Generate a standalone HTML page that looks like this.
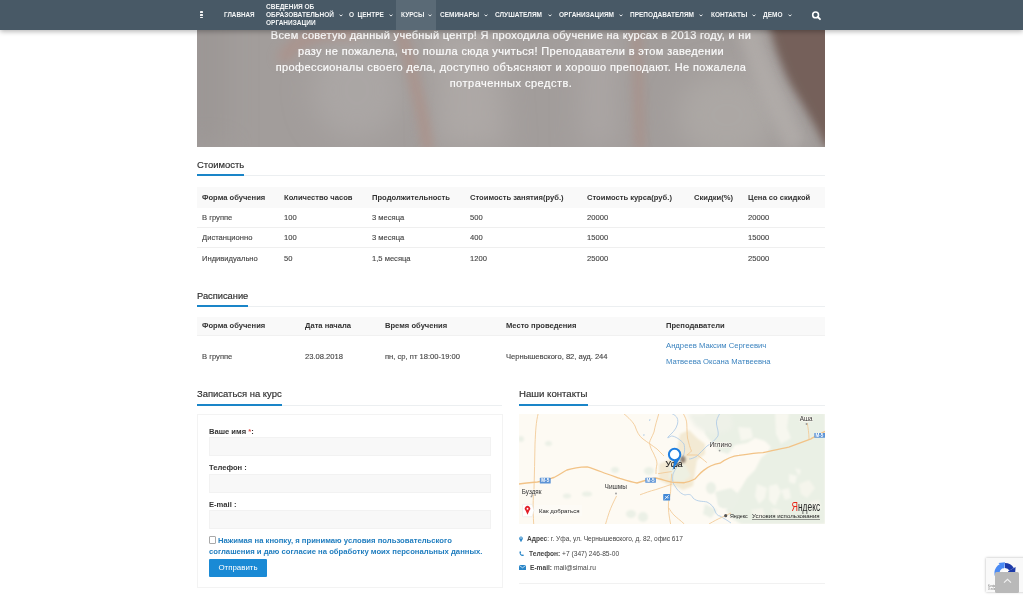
<!DOCTYPE html>
<html><head><meta charset="utf-8"><title>Курс</title>
<style>
html,body{margin:0;padding:0;background:#fff;}
body{width:1023px;height:597px;position:relative;overflow:hidden;font-family:"Liberation Sans",sans-serif;}
.t{position:absolute;white-space:nowrap;will-change:transform;}
.b{position:absolute;}
</style></head><body>
<div class="b" style="left:197px;top:0px;width:627.5px;height:147px;overflow:hidden;background:#a29d9b"><svg width="628" height="147" viewBox="0 0 628 147" style="position:absolute;left:0;top:0">
<defs>
<filter id="hb1" filterUnits="userSpaceOnUse" x="-100" y="-100" width="900" height="400"><feGaussianBlur stdDeviation="6"/></filter>
<filter id="hb2" filterUnits="userSpaceOnUse" x="-100" y="-100" width="900" height="400"><feGaussianBlur stdDeviation="14"/></filter>
<filter id="hb3" filterUnits="userSpaceOnUse" x="-100" y="-100" width="900" height="400"><feGaussianBlur stdDeviation="4.5"/></filter>
</defs>
<rect width="628" height="147" fill="#a29d9b"/>
<rect x="-20" y="0" width="50" height="147" fill="#9c9795" filter="url(#hb2)"/>
<!-- lighter zones -->
<ellipse cx="160" cy="90" rx="45" ry="50" fill="#aaa6a4" filter="url(#hb2)"/>
<path d="M236,30 L300,30 L310,147 L240,147 Z" fill="#ada8a6" filter="url(#hb2)"/>
<path d="M383,30 L418,30 L420,147 L385,147 Z" fill="#aba6a4" filter="url(#hb2)"/>
<ellipse cx="530" cy="115" rx="50" ry="45" fill="#aca7a4" filter="url(#hb2)"/>
<!-- reddish arc top-left -->
<path d="M85,62 C92,46 105,38 125,34 C140,32 150,32 160,34" fill="none" stroke="#b58b80" stroke-width="12" filter="url(#hb1)" opacity="0.55"/>
<!-- streak 1 -->
<path d="M202,26 C207,40 212,60 217,80 C222,100 228,125 231,150" fill="none" stroke="#b2887c" stroke-width="12" filter="url(#hb3)" opacity="0.42"/>
<!-- streak 2 -->
<path d="M440,26 C440,60 442,100 443,150" fill="none" stroke="#ae877c" stroke-width="12" filter="url(#hb3)" opacity="0.38"/>
<!-- highlight near brown -->
<path d="M548,20 C560,60 575,95 600,147" fill="none" stroke="#b2adaa" stroke-width="22" filter="url(#hb1)" opacity="0.8"/>
<!-- brown right -->
<path d="M566,0 L640,0 L640,147 L628,147 C620,128 606,105 594,85 C582,62 572,30 566,0 Z" fill="#75605a" filter="url(#hb3)"/>
</svg>
</div>
<div class="t" style="left:200.5px;width:620px;text-align:center;top:28.99px;font-size:11px;line-height:13.2px;color:#fbfbfb;font-weight:normal;letter-spacing:0.31px;-webkit-text-stroke:0.2px #fbfbfb;">Всем советую данный учебный центр! Я проходила обучение на курсах в 2013 году, и ни</div>
<div class="t" style="left:200.5px;width:620px;text-align:center;top:44.89px;font-size:11px;line-height:13.2px;color:#fbfbfb;font-weight:normal;letter-spacing:0.36px;-webkit-text-stroke:0.2px #fbfbfb;">разу не пожалела, что пошла сюда учиться! Преподаватели в этом заведении</div>
<div class="t" style="left:200.5px;width:620px;text-align:center;top:60.69px;font-size:11px;line-height:13.2px;color:#fbfbfb;font-weight:normal;letter-spacing:0.39px;-webkit-text-stroke:0.2px #fbfbfb;">профессионалы своего дела, доступно объясняют и хорошо преподают. Не пожалела</div>
<div class="t" style="left:200.5px;width:620px;text-align:center;top:76.89px;font-size:11px;line-height:13.2px;color:#fbfbfb;font-weight:normal;letter-spacing:0.5px;-webkit-text-stroke:0.2px #fbfbfb;">потраченных средств.</div>
<div class="b" style="left:0px;top:0px;width:1023px;height:30px;background:#485966;box-shadow:0 1.5px 5px rgba(0,0,0,0.3);"></div>
<div class="b" style="left:396px;top:0px;width:40px;height:30px;background:#5a6a76;"></div>
<div class="b" style="left:200.2px;top:10.8px;width:3px;height:1.8px;background:#f4f4f4;border-radius:0.6px;"></div>
<div class="b" style="left:200.2px;top:13.8px;width:3px;height:1.8px;background:#f4f4f4;border-radius:0.6px;"></div>
<div class="b" style="left:200.2px;top:16.6px;width:3px;height:1.8px;background:#f4f4f4;border-radius:0.6px;"></div>
<div class="t" style="left:223.6px;top:10.94px;font-size:6.3px;line-height:7.56px;color:#f3f5f6;font-weight:bold;letter-spacing:0px;">ГЛАВНАЯ</div>
<div class="t" style="left:266.2px;top:2.95px;font-size:6.5px;line-height:7.8px;color:#f3f5f6;font-weight:bold;letter-spacing:0px;">СВЕДЕНИЯ ОБ</div>
<div class="t" style="left:266.2px;top:10.75px;font-size:6.5px;line-height:7.8px;color:#f3f5f6;font-weight:bold;letter-spacing:0px;">ОБРАЗОВАТЕЛЬНОЙ</div>
<div class="t" style="left:266.2px;top:18.55px;font-size:6.5px;line-height:7.8px;color:#f3f5f6;font-weight:bold;letter-spacing:0px;">ОРГАНИЗАЦИИ</div>
<svg class="b" style="left:338.5px;top:13.8px" width="4" height="3" viewBox="0 0 4 3"><path d="M0.5 0.6 L2 2.1 L3.5 0.6" fill="none" stroke="#eef1f3" stroke-width="1"/></svg>
<div class="t" style="left:349.4px;top:10.85px;font-size:6.5px;line-height:7.8px;color:#f3f5f6;font-weight:bold;letter-spacing:0px;word-spacing:1.6px;">О ЦЕНТРЕ</div>
<svg class="b" style="left:388.8px;top:13.8px" width="4" height="3" viewBox="0 0 4 3"><path d="M0.5 0.6 L2 2.1 L3.5 0.6" fill="none" stroke="#eef1f3" stroke-width="1"/></svg>
<div class="t" style="left:400.7px;top:10.85px;font-size:6.5px;line-height:7.8px;color:#f3f5f6;font-weight:bold;letter-spacing:0px;">КУРСЫ</div>
<svg class="b" style="left:428.2px;top:13.8px" width="4" height="3" viewBox="0 0 4 3"><path d="M0.5 0.6 L2 2.1 L3.5 0.6" fill="none" stroke="#eef1f3" stroke-width="1"/></svg>
<div class="t" style="left:439.8px;top:10.85px;font-size:6.5px;line-height:7.8px;color:#f3f5f6;font-weight:bold;letter-spacing:0px;">СЕМИНАРЫ</div>
<svg class="b" style="left:483.5px;top:13.8px" width="4" height="3" viewBox="0 0 4 3"><path d="M0.5 0.6 L2 2.1 L3.5 0.6" fill="none" stroke="#eef1f3" stroke-width="1"/></svg>
<div class="t" style="left:495px;top:10.85px;font-size:6.5px;line-height:7.8px;color:#f3f5f6;font-weight:bold;letter-spacing:0px;">СЛУШАТЕЛЯМ</div>
<svg class="b" style="left:548px;top:13.8px" width="4" height="3" viewBox="0 0 4 3"><path d="M0.5 0.6 L2 2.1 L3.5 0.6" fill="none" stroke="#eef1f3" stroke-width="1"/></svg>
<div class="t" style="left:558.8px;top:10.85px;font-size:6.5px;line-height:7.8px;color:#f3f5f6;font-weight:bold;letter-spacing:0px;">ОРГАНИЗАЦИЯМ</div>
<svg class="b" style="left:618.8px;top:13.8px" width="4" height="3" viewBox="0 0 4 3"><path d="M0.5 0.6 L2 2.1 L3.5 0.6" fill="none" stroke="#eef1f3" stroke-width="1"/></svg>
<div class="t" style="left:630.2px;top:10.85px;font-size:6.5px;line-height:7.8px;color:#f3f5f6;font-weight:bold;letter-spacing:0px;">ПРЕПОДАВАТЕЛЯМ</div>
<svg class="b" style="left:699.2px;top:13.8px" width="4" height="3" viewBox="0 0 4 3"><path d="M0.5 0.6 L2 2.1 L3.5 0.6" fill="none" stroke="#eef1f3" stroke-width="1"/></svg>
<div class="t" style="left:711px;top:10.85px;font-size:6.5px;line-height:7.8px;color:#f3f5f6;font-weight:bold;letter-spacing:0px;">КОНТАКТЫ</div>
<svg class="b" style="left:751.9px;top:13.8px" width="4" height="3" viewBox="0 0 4 3"><path d="M0.5 0.6 L2 2.1 L3.5 0.6" fill="none" stroke="#eef1f3" stroke-width="1"/></svg>
<div class="t" style="left:763px;top:10.85px;font-size:6.5px;line-height:7.8px;color:#f3f5f6;font-weight:bold;letter-spacing:0px;">ДЕМО</div>
<svg class="b" style="left:787.5px;top:13.8px" width="4" height="3" viewBox="0 0 4 3"><path d="M0.5 0.6 L2 2.1 L3.5 0.6" fill="none" stroke="#eef1f3" stroke-width="1"/></svg>
<svg class="b" style="left:811px;top:11px" width="11" height="10" viewBox="0 0 11 10"><circle cx="4.6" cy="3.9" r="2.9" fill="none" stroke="#fff" stroke-width="1.6"/><path d="M6.8 6 L9 8.2" stroke="#fff" stroke-width="1.8" stroke-linecap="round"/></svg>
<div class="b" style="left:197px;top:175px;width:627.5px;height:1px;background:#eceff1;"></div>
<div class="b" style="left:197px;top:174px;width:47px;height:2px;background:#1a85c8;"></div>
<div class="t" style="left:197px;top:158.76px;font-size:9.45px;line-height:11.34px;color:#2b2b2b;font-weight:normal;letter-spacing:0px;-webkit-text-stroke:0.15px #2b2b2b;">Стоимость</div>
<div class="b" style="left:197px;top:306px;width:627.5px;height:1px;background:#eceff1;"></div>
<div class="b" style="left:197px;top:305px;width:51.30000000000001px;height:2px;background:#1a85c8;"></div>
<div class="t" style="left:197px;top:291.00px;font-size:9.3px;line-height:11.16px;color:#2b2b2b;font-weight:normal;letter-spacing:0px;-webkit-text-stroke:0.15px #2b2b2b;">Расписание</div>
<div class="b" style="left:197px;top:404.8px;width:305px;height:1px;background:#eceff1;"></div>
<div class="b" style="left:197px;top:403.8px;width:85.19999999999999px;height:2px;background:#1a85c8;"></div>
<div class="t" style="left:197px;top:388.46px;font-size:9.45px;line-height:11.34px;color:#2b2b2b;font-weight:normal;letter-spacing:0px;-webkit-text-stroke:0.15px #2b2b2b;">Записаться на курс</div>
<div class="b" style="left:519px;top:404.8px;width:305.5px;height:1px;background:#eceff1;"></div>
<div class="b" style="left:519px;top:403.8px;width:68.5px;height:2px;background:#1a85c8;"></div>
<div class="t" style="left:519px;top:388.37px;font-size:9.65px;line-height:11.58px;color:#2b2b2b;font-weight:normal;letter-spacing:0px;-webkit-text-stroke:0.15px #2b2b2b;">Наши контакты</div>
<div class="b" style="left:197px;top:187px;width:627.5px;height:21px;background:#f9f9f9;"></div>
<div class="t" style="left:201.8px;top:192.81px;font-size:7.6px;line-height:9.12px;color:#333;font-weight:bold;letter-spacing:0px;">Форма обучения</div>
<div class="t" style="left:283.5px;top:192.81px;font-size:7.6px;line-height:9.12px;color:#333;font-weight:bold;letter-spacing:0px;">Количество часов</div>
<div class="t" style="left:371.6px;top:192.81px;font-size:7.6px;line-height:9.12px;color:#333;font-weight:bold;letter-spacing:0px;">Продолжительность</div>
<div class="t" style="left:470px;top:192.81px;font-size:7.6px;line-height:9.12px;color:#333;font-weight:bold;letter-spacing:0px;">Стоимость занятия(руб.)</div>
<div class="t" style="left:587px;top:192.81px;font-size:7.6px;line-height:9.12px;color:#333;font-weight:bold;letter-spacing:0px;">Стоимость курса(руб.)</div>
<div class="t" style="left:693.7px;top:192.81px;font-size:7.6px;line-height:9.12px;color:#333;font-weight:bold;letter-spacing:0px;">Скидки(%)</div>
<div class="t" style="left:747.5px;top:192.81px;font-size:7.6px;line-height:9.12px;color:#333;font-weight:bold;letter-spacing:0px;">Цена со скидкой</div>
<div class="t" style="left:201.8px;top:213.11px;font-size:7.6px;line-height:9.12px;color:#444;font-weight:normal;letter-spacing:0px;-webkit-text-stroke:0.12px #444;">В группе</div>
<div class="t" style="left:283.5px;top:213.11px;font-size:7.6px;line-height:9.12px;color:#444;font-weight:normal;letter-spacing:0px;-webkit-text-stroke:0.12px #444;">100</div>
<div class="t" style="left:371.6px;top:213.11px;font-size:7.6px;line-height:9.12px;color:#444;font-weight:normal;letter-spacing:0px;-webkit-text-stroke:0.12px #444;">3 месяца</div>
<div class="t" style="left:470px;top:213.11px;font-size:7.6px;line-height:9.12px;color:#444;font-weight:normal;letter-spacing:0px;-webkit-text-stroke:0.12px #444;">500</div>
<div class="t" style="left:587px;top:213.11px;font-size:7.6px;line-height:9.12px;color:#444;font-weight:normal;letter-spacing:0px;-webkit-text-stroke:0.12px #444;">20000</div>
<div class="t" style="left:747.5px;top:213.11px;font-size:7.6px;line-height:9.12px;color:#444;font-weight:normal;letter-spacing:0px;-webkit-text-stroke:0.12px #444;">20000</div>
<div class="t" style="left:201.8px;top:233.41px;font-size:7.6px;line-height:9.12px;color:#444;font-weight:normal;letter-spacing:0px;-webkit-text-stroke:0.12px #444;">Дистанционно</div>
<div class="t" style="left:283.5px;top:233.41px;font-size:7.6px;line-height:9.12px;color:#444;font-weight:normal;letter-spacing:0px;-webkit-text-stroke:0.12px #444;">100</div>
<div class="t" style="left:371.6px;top:233.41px;font-size:7.6px;line-height:9.12px;color:#444;font-weight:normal;letter-spacing:0px;-webkit-text-stroke:0.12px #444;">3 месяца</div>
<div class="t" style="left:470px;top:233.41px;font-size:7.6px;line-height:9.12px;color:#444;font-weight:normal;letter-spacing:0px;-webkit-text-stroke:0.12px #444;">400</div>
<div class="t" style="left:587px;top:233.41px;font-size:7.6px;line-height:9.12px;color:#444;font-weight:normal;letter-spacing:0px;-webkit-text-stroke:0.12px #444;">15000</div>
<div class="t" style="left:747.5px;top:233.41px;font-size:7.6px;line-height:9.12px;color:#444;font-weight:normal;letter-spacing:0px;-webkit-text-stroke:0.12px #444;">15000</div>
<div class="t" style="left:201.8px;top:253.71px;font-size:7.6px;line-height:9.12px;color:#444;font-weight:normal;letter-spacing:0px;-webkit-text-stroke:0.12px #444;">Индивидуально</div>
<div class="t" style="left:283.5px;top:253.71px;font-size:7.6px;line-height:9.12px;color:#444;font-weight:normal;letter-spacing:0px;-webkit-text-stroke:0.12px #444;">50</div>
<div class="t" style="left:371.6px;top:253.71px;font-size:7.6px;line-height:9.12px;color:#444;font-weight:normal;letter-spacing:0px;-webkit-text-stroke:0.12px #444;">1,5 месяца</div>
<div class="t" style="left:470px;top:253.71px;font-size:7.6px;line-height:9.12px;color:#444;font-weight:normal;letter-spacing:0px;-webkit-text-stroke:0.12px #444;">1200</div>
<div class="t" style="left:587px;top:253.71px;font-size:7.6px;line-height:9.12px;color:#444;font-weight:normal;letter-spacing:0px;-webkit-text-stroke:0.12px #444;">25000</div>
<div class="t" style="left:747.5px;top:253.71px;font-size:7.6px;line-height:9.12px;color:#444;font-weight:normal;letter-spacing:0px;-webkit-text-stroke:0.12px #444;">25000</div>
<div class="b" style="left:197px;top:227px;width:627.5px;height:1px;background:#efefef;"></div>
<div class="b" style="left:197px;top:247.3px;width:627.5px;height:1px;background:#efefef;"></div>
<div class="b" style="left:197px;top:316.5px;width:627.5px;height:19.5px;background:#f9f9f9;border-bottom:1px solid #f1f1f1;box-sizing:border-box;"></div>
<div class="t" style="left:201.8px;top:321.41px;font-size:7.6px;line-height:9.12px;color:#333;font-weight:bold;letter-spacing:0px;">Форма обучения</div>
<div class="t" style="left:305px;top:321.41px;font-size:7.6px;line-height:9.12px;color:#333;font-weight:bold;letter-spacing:0px;">Дата начала</div>
<div class="t" style="left:384.5px;top:321.41px;font-size:7.6px;line-height:9.12px;color:#333;font-weight:bold;letter-spacing:0px;">Время обучения</div>
<div class="t" style="left:505.6px;top:321.41px;font-size:7.6px;line-height:9.12px;color:#333;font-weight:bold;letter-spacing:0px;">Место проведения</div>
<div class="t" style="left:666px;top:321.41px;font-size:7.6px;line-height:9.12px;color:#333;font-weight:bold;letter-spacing:0px;">Преподаватели</div>
<div class="t" style="left:201.8px;top:351.81px;font-size:7.6px;line-height:9.12px;color:#444;font-weight:normal;letter-spacing:0px;-webkit-text-stroke:0.12px #444;">В группе</div>
<div class="t" style="left:305px;top:351.81px;font-size:7.6px;line-height:9.12px;color:#444;font-weight:normal;letter-spacing:0px;-webkit-text-stroke:0.12px #444;">23.08.2018</div>
<div class="t" style="left:384.5px;top:351.81px;font-size:7.6px;line-height:9.12px;color:#444;font-weight:normal;letter-spacing:0px;-webkit-text-stroke:0.12px #444;">пн, ср, пт 18:00-19:00</div>
<div class="t" style="left:505.6px;top:351.81px;font-size:7.6px;line-height:9.12px;color:#444;font-weight:normal;letter-spacing:0px;-webkit-text-stroke:0.12px #444;">Чернышевского, 82, ауд. 244</div>
<div class="t" style="left:666px;top:341.31px;font-size:7.7px;line-height:9.24px;color:#3b83bf;font-weight:normal;letter-spacing:0px;">Андреев Максим Сергеевич</div>
<div class="t" style="left:666px;top:357.11px;font-size:7.7px;line-height:9.24px;color:#3b83bf;font-weight:normal;letter-spacing:0px;">Матвеева Оксана Матвеевна</div>
<div class="b" style="left:197px;top:413.5px;width:305.5px;height:174.5px;border:1px solid #f3f3f3;box-sizing:border-box;"></div>
<div class="t" style="left:208.8px;top:426.81px;font-size:7.6px;line-height:9.12px;color:#333;font-weight:bold;letter-spacing:0px;">Ваше имя <span style="color:#e0504a">*</span>:</div>
<div class="b" style="left:208.5px;top:436.5px;width:282.5px;height:19px;background:#f8f8f8;border:1px solid #f2f2f2;box-sizing:border-box;"></div>
<div class="t" style="left:208.8px;top:463.41px;font-size:7.6px;line-height:9.12px;color:#333;font-weight:bold;letter-spacing:0px;">Телефон :</div>
<div class="b" style="left:208.5px;top:473.6px;width:282.5px;height:19px;background:#f8f8f8;border:1px solid #f2f2f2;box-sizing:border-box;"></div>
<div class="t" style="left:208.8px;top:499.71px;font-size:7.6px;line-height:9.12px;color:#333;font-weight:bold;letter-spacing:0px;">E-mail :</div>
<div class="b" style="left:208.5px;top:510.4px;width:282.5px;height:19px;background:#f8f8f8;border:1px solid #f2f2f2;box-sizing:border-box;"></div>
<div class="b" style="left:208.6px;top:536.3px;width:7.4px;height:7.4px;border:1px solid #a9a9a9;border-radius:1px;box-sizing:border-box;background:#fff;"></div>
<div class="t" style="left:218px;top:535.72px;font-size:7.69px;line-height:9.23px;color:#1f7dbf;font-weight:bold;letter-spacing:0px;">Нажимая на кнопку, я принимаю условия пользовательского</div>
<div class="t" style="left:208.5px;top:547.22px;font-size:7.69px;line-height:9.23px;color:#1f7dbf;font-weight:bold;letter-spacing:0px;">соглашения и даю согласие на обработку моих персональных данных.</div>
<div class="b" style="left:209px;top:559px;width:57.5px;height:17.5px;background:#1a8ad5;border-radius:1px;"></div>
<div class="t" style="left:207.5px;width:60px;text-align:center;top:563.02px;font-size:7.9px;line-height:9.48px;color:#fff;font-weight:normal;letter-spacing:0px;">Отправить</div>
<div class="b" style="left:519px;top:413.8px;width:306px;height:110px;background:#fdfaf3;overflow:hidden;will-change:transform"><svg width="306" height="110" viewBox="0 0 306 110" style="position:absolute;left:0;top:0">
<defs>
<filter id="bl1" filterUnits="userSpaceOnUse" x="-50" y="-50" width="420" height="220"><feGaussianBlur stdDeviation="1"/></filter>
<filter id="bl2" filterUnits="userSpaceOnUse" x="-50" y="-50" width="420" height="220"><feGaussianBlur stdDeviation="2"/></filter>
</defs>
<rect width="306" height="110" fill="#fdfaf3"/>
<!-- forest green right -->
<path d="M186,-1 L306,-1 L306,110 L222,110 L212,104 L207,96 L214,86 L222,74 L228,64 L236,56 L242,44 L248,39 L252,33 L246,27 L236,24 L228,29 L216,31 L209,40 L200,37 L192,28 L186,20 Z" fill="#eaf0e5" filter="url(#bl1)"/>
<path d="M219,13 L232,14 L234,24 L222,27 Z M256,-1 L270,-1 L268,14 L272,24 L262,30 L257,20 Z M250,72 L258,70 L262,78 L256,92 L250,86 Z M262,76 L270,74 L272,84 L266,86 Z M270,60 L278,62 L276,70 L270,68 Z M238,70 L248,74 L246,84 L240,90 L236,82 Z M276,54 L282,56 L280,62 Z" fill="#f7f7ef" filter="url(#bl1)"/>
<path d="M280,70 L290,66 L296,74 L288,84 L282,80 Z M290,88 L300,86 L302,94 L294,96 Z M232,96 L244,94 L246,104 L236,106 Z M252,94 L262,96 L258,104 Z" fill="#f5f5ec" filter="url(#bl1)"/>
<path d="M168,-1 L212,-1 L214,14 L200,20 L186,18 L176,12 Z" fill="#eef1e8" filter="url(#bl2)"/>
<!-- scattered green blobs -->
<g fill="#ebf0e6" filter="url(#bl1)">
<ellipse cx="29.5" cy="29.4" rx="3.5" ry="2.5"/>
<ellipse cx="96" cy="56" rx="4" ry="3"/>
<ellipse cx="68" cy="80" rx="5" ry="2.5"/>
<ellipse cx="48" cy="82" rx="4" ry="2.5"/>
<ellipse cx="130" cy="57" rx="5" ry="4"/>
<ellipse cx="124" cy="103" rx="5" ry="5"/>
<ellipse cx="192" cy="74" rx="5" ry="6"/>
<ellipse cx="205" cy="88" rx="6" ry="6"/>
<ellipse cx="112" cy="100" rx="5" ry="4"/>
<ellipse cx="2" cy="25" rx="3" ry="3"/>
</g>
<!-- city area -->
<path d="M140,50 L150,46 L158,36 L161,20 L170,16 L178,24 L186,30 L186,40 L178,46 L176,58 L174,72 L164,76 L156,72 L148,70 L140,66 Z" fill="#f3ead4" filter="url(#bl1)"/>
<path d="M150,52 L166,50 L172,62 L160,70 L150,64 Z" fill="#eef0e2" filter="url(#bl1)"/>
<path d="M196,78 L212,74 L222,82 L214,96 L200,92 Z M186,90 L198,96 L192,104 L184,100 Z" fill="#ebf0e6" filter="url(#bl1)"/>
<!-- rivers -->
<g fill="none" stroke="#a9c8e6" stroke-width="0.8">
<path d="M151.5,-1 C156,1 160,3 158.5,10 C157,16 153,19 149,23 C148,25 150,23 152.5,22 C156,22 162,26 165,30 C166,34 166,40 163,44 C160,50 156,55 154,60 C153,66 154,70 156,72 C158,76 162,80 166,81 C170,80 172,80 174,84 C178,88 184,87 188,88 C192,90 195,93 196,97 C197,100 199,102 201,102 C204,104 208,106 212,109"/>
<path d="M201,-1 C199,3 197,6 197.5,10 C198,14 200,18 199,22 C196,26 192,30 188,32 C184,36 180,40 178,42 C175,44 172,45 170,45"/>
<path d="M131,5 L130.5,7 M125,20 L124.8,22"/>
</g>
<!-- roads -->
<g fill="none" stroke="#f2c994" stroke-width="0.85">
<path d="M19.3,-1 C17,8 16.6,17 16,30 C15.7,45 15.5,60 15,75 C14,85 13.8,95 14.7,110"/>
<path d="M104,-1 C110,4 114,8 116,12 C118,18 120,22 124,25 C128,28 134,32 138,35 C141,38 143,40 145,42"/>
<path d="M140,-1 C138,6 136,12 135,18 C133,23 131,26 130.5,28.6 C131,33 133,37 134.4,39 C136,43 138,46 138,50 C137,54 137,57 137,60"/>
<path d="M164,-1 C166,3 167.8,6 167.8,10 C168,15 168,20 168.5,24 C170,30 171,34 172.5,37 C171,39 169,40 167.8,41 C172,41 176,41 178.3,41 C182,44 185,46 187.8,48.6"/>
<path d="M97.6,81.9 C95,87 92,93 90.2,98.4 C89,102 88,105 86.6,110"/>
<path d="M121,80.8 C126,79 131,77 136.8,75.6 C142,74 147,72 152.7,70.3"/>
<path d="M152.7,59.7 C152,66 151.8,72 151.6,77.7 C151,82 150,85 149.5,88.2 C149,95 150,102 151.6,110"/>
<path d="M149.5,93.5 C151,96 153,99 154.8,100.9 C158,104 161,106 165.3,110"/>
<path d="M139,59.7 C144,59 148,58 152.7,57.6"/>
<path d="M288.3,9 C289,14 290,19 290,25"/>
<path d="M190,110 C200,104 206,102 212,99"/>

</g>
<path d="M0,70 C6,69 12,68.5 18.4,68 C24,67 30,65 35,63.5 C40,61 44,58 47.9,56 C54,54 62,53 68.1,52.8 C73,54 78,56 82.9,58 C88,60 94,62 100.9,64.4 C106,66 112,68 118,69 C124,67 130,65 136.8,64 C140,64.5 146,66.5 152.7,68.2 C158,68.7 162,68.7 165.3,68.7 C170,68 173,66.5 175.9,65 C179,62 181,59 184.3,56.6 C190,52 196,50 201,49.2 C207,45 214,42 220,41.4 C230,40 238,39 244,38.7 C252,37 260,35 269.8,33.1 C278,30 286,27 292,24.8 C297,22 302,19 307,17" fill="none" stroke="#f2c387" stroke-width="1.35"/>
<!-- M-5 badges -->
<g>
<rect x="20.8" y="63.8" width="10.9" height="5.7" rx="0.6" fill="#5d94d6"/>
<rect x="126.3" y="63.8" width="10.6" height="5" rx="0.6" fill="#5d94d6"/>
<rect x="295.3" y="19" width="11" height="4.8" rx="0.6" fill="#5d94d6"/>
<g font-family="Liberation Sans" font-size="4.6" font-weight="bold" fill="#fff">
<text x="22.3" y="68.4">M-5</text><text x="127.6" y="67.9">M-5</text><text x="296.5" y="23.1">M-5</text>
</g>
</g>
<!-- airplane -->
<rect x="144.2" y="80" width="6.9" height="6.6" rx="0.6" fill="#4389d6"/>
<path d="M145.6,85.3 L149.8,81.2 M146.3,82.2 L148.6,84.5 M148.2,82.6 L149.6,84.2" stroke="#fff" stroke-width="0.8"/>
<!-- labels -->
<g font-family="Liberation Sans" fill="#333" stroke="#fdfaf3" stroke-width="1" paint-order="stroke">
<text x="2.8" y="79.5" font-size="6.3">Буздяк</text>
<text x="85.6" y="74.8" font-size="6.5">Чишмы</text>
<text x="190.5" y="33" font-size="6.7">Иглино</text>
<text x="280.7" y="6.8" font-size="6.3">Аша</text>
</g>
<g fill="#999">
<circle cx="12.5" cy="82.4" r="0.9"/><circle cx="97" cy="79.5" r="0.9"/><circle cx="200.6" cy="36.6" r="0.9"/><circle cx="287.5" cy="10" r="0.9"/>
</g>
<!-- city name -->
<text x="146.5" y="53.4" font-family="Liberation Sans" font-size="8.6" fill="#222" stroke="#222" stroke-width="0.2" letter-spacing="-0.15">Уфа</text>
<!-- pin shadow -->
<ellipse cx="164" cy="45.5" rx="2.6" ry="3.6" fill="#6a5a50" opacity="0.7" filter="url(#bl1)"/>
<!-- pin -->
<path d="M153.6,56.2 L155.5,46.6 L161.2,44.2 Z" fill="#1e7ee0"/>
<circle cx="155.6" cy="40.5" r="5.7" fill="#fff" stroke="#1e7ee0" stroke-width="2"/>
<!-- how to get -->
<rect x="15" y="91" width="48" height="11" fill="#ffffff" opacity="0.3"/>
<path d="M4.2,90.3 L13,90.3 L15,96.5 L13,102.7 L4.2,102.7 Q3.5,102.7 3.5,102 L3.5,91 Q3.5,90.3 4.2,90.3 Z" fill="#fff" stroke="#e4e4e4" stroke-width="0.5"/>
<path d="M8.5,100.8 L6.6,96.6 A2.7,2.7 0 1 1 10.4,96.6 Z" fill="#e3202a"/>
<circle cx="8.5" cy="94.8" r="0.95" fill="#fff"/>
<text x="20.1" y="98.9" font-family="Liberation Sans" font-size="6.05" fill="#222">Как добраться</text>
<!-- yandex logo -->
<text x="0" y="0" font-family="Liberation Sans" font-size="13.2" fill="#e8271a" transform="translate(272.5,96.9) scale(0.68,1)">Я</text>
<text x="0" y="0" font-family="Liberation Sans" font-size="12.6" fill="#2a2a2a" transform="translate(279,96.9) scale(0.665,1)">ндекс</text>
<!-- copyright -->
<circle cx="206.7" cy="101.7" r="1.6" fill="#555"/>
<text x="210.9" y="104.3" font-family="Liberation Sans" font-size="5.3" fill="#222">Яндекс</text>
<text x="233" y="104.1" font-family="Liberation Sans" font-size="6.1" fill="#222">Условия использования</text>
<rect x="233" y="105.1" width="68" height="0.55" fill="#444"/>
</svg>
</div>
<svg class="b" style="left:518.8px;top:535.8px" width="4" height="6.5" viewBox="0 0 4 6.5"><path d="M2 6.3 L0.4 3.2 A1.8 1.8 0 1 1 3.6 3.2 Z" fill="#2a86c8"/><circle cx="2" cy="2" r="0.7" fill="#fff"/></svg>
<div class="t" style="left:526.9px;top:534.97px;font-size:6.58px;line-height:7.9px;color:#444;font-weight:normal;letter-spacing:0px;"><b>Адрес</b>: г. Уфа, ул. Чернышевского, д. 82, офис 617</div>
<svg class="b" style="left:519px;top:550.5px" width="5" height="5.5" viewBox="0 0 5 5.5"><path d="M0.6 0.6 L1.6 0.3 L2.2 1.6 L1.5 2.2 Q2.2 3.4 3.2 3.9 L3.8 3.2 L4.8 3.9 L4.5 5 Q2.5 5.2 1.2 3.7 Q0.2 2.3 0.6 0.6 Z" fill="#2a86c8"/></svg>
<div class="t" style="left:528.6px;top:549.51px;font-size:6.65px;line-height:7.98px;color:#444;font-weight:normal;letter-spacing:0px;"><b>Телефон:</b> +7 (347) 246-85-00</div>
<svg class="b" style="left:518.8px;top:565.2px" width="7" height="5.2" viewBox="0 0 7 5.2"><rect x="0" y="0" width="7" height="5.2" fill="#2a86c8"/><path d="M0 0.3 L3.5 2.8 L7 0.3" fill="none" stroke="#fff" stroke-width="0.7"/></svg>
<div class="t" style="left:530px;top:563.74px;font-size:6.62px;line-height:7.94px;color:#444;font-weight:normal;letter-spacing:0px;"><b>E-mail:</b> mail@simai.ru</div>
<div class="b" style="left:519px;top:583px;width:305.5px;height:1px;background:#f1f1f1;"></div>
<div class="b" style="left:986px;top:557.5px;width:40px;height:34px;background:#f9f9f9;box-shadow:0 0 2.5px rgba(0,0,0,0.3);"></div>
<svg class="b" style="left:993px;top:560.5px" width="24" height="24" viewBox="0 0 24 24"><path d="M4.6 15 A7.6 7.6 0 0 1 11.5 4.4" fill="none" stroke="#4a8af4" stroke-width="5"/><path d="M12 4.4 A7.6 7.6 0 0 1 18.6 8.2" fill="none" stroke="#1c3aa9" stroke-width="5"/><path d="M22.6 6 L22 13.5 L14.6 10.6 Z" fill="#1c3aa9"/><path d="M5.5 2 L12 1.2 L10.5 7.6 Z" fill="#4a8af4"/><rect x="10" y="9.5" width="5" height="3.2" fill="#fff"/><path d="M12 19.6 A7.6 7.6 0 0 1 4.6 15" fill="none" stroke="#ababab" stroke-width="5"/></svg>
<div class="t" style="left:988px;top:585px;font-size:2.6px;line-height:3px;color:#777">Конфиденциальн<br>Условия</div>
<div class="b" style="left:995.2px;top:572px;width:23.4px;height:21.4px;background:#b9b9b9;border-radius:1.5px;"></div>
<svg class="b" style="left:1003.4px;top:578px" width="9" height="6" viewBox="0 0 9 6"><path d="M1 4.6 L4.5 1.3 L8 4.6" fill="none" stroke="#f2f2f2" stroke-width="1.1"/></svg>
</body></html>
